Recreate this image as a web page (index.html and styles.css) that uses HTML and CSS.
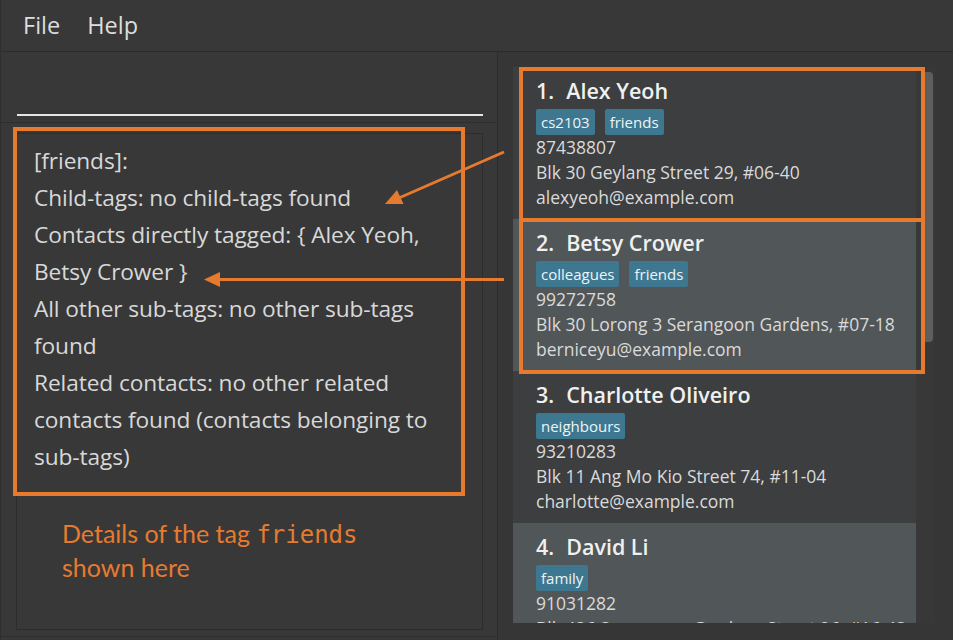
FILE: index.html
```html
<!DOCTYPE html>
<html>
<head>
<meta charset="utf-8">
<link rel="stylesheet" href="styles.css">
</head>
<body>
<div class="app">
  <div class="menubar">
    <span class="menu-item">File</span>
    <span class="menu-item">Help</span>
  </div>
  <div class="main">
    <div class="left">
      <div class="cmd"><div class="cmd-line"></div></div>
      <div class="result-area">
        <div class="result">
          <div class="result-text">[friends]:<br>Child-tags: no child-tags found<br>Contacts directly tagged: { Alex Yeoh,<br>Betsy Crower }<br>All other sub-tags: no other sub-tags<br>found<br>Related contacts: no other related<br>contacts found (contacts belonging to<br>sub-tags)</div>
          <div class="note">Details of the tag <code class="mono">friends</code><br>shown here</div>
        </div>
      </div>
    </div>
    <div class="divider"></div>
    <div class="right">
      <div class="list">
        <div class="cards">
          <div class="card dark">
            <div class="name"><span class="idx">1.</span>Alex Yeoh</div>
            <div class="tags"><span class="tag">cs2103</span><span class="tag">friends</span></div>
            <div class="line">87438807</div>
            <div class="line">Blk 30 Geylang Street 29, #06-40</div>
            <div class="line">alexyeoh@example.com</div>
          </div>
          <div class="card light">
            <div class="name"><span class="idx">2.</span>Betsy Crower</div>
            <div class="tags"><span class="tag">colleagues</span><span class="tag">friends</span></div>
            <div class="line">99272758</div>
            <div class="line">Blk 30 Lorong 3 Serangoon Gardens, #07-18</div>
            <div class="line">berniceyu@example.com</div>
          </div>
          <div class="card dark">
            <div class="name"><span class="idx">3.</span>Charlotte Oliveiro</div>
            <div class="tags"><span class="tag">neighbours</span></div>
            <div class="line">93210283</div>
            <div class="line">Blk 11 Ang Mo Kio Street 74, #11-04</div>
            <div class="line">charlotte@example.com</div>
          </div>
          <div class="card light">
            <div class="name"><span class="idx">4.</span>David Li</div>
            <div class="tags"><span class="tag">family</span></div>
            <div class="line">91031282</div>
            <div class="line">Blk 436 Serangoon Gardens Street 26, #16-43</div>
            <div class="line">lidavid@example.com</div>
          </div>
        </div>
        <div class="scroll"><div class="thumb"></div></div>
      </div>
    </div>
  </div>

  <div class="hl hl-result"></div>
  <div class="hl hl-card1"></div>
  <div class="hl hl-card2"></div>
  <svg class="arrows" width="953" height="640" viewBox="0 0 953 640">
    <line x1="503" y1="152" x2="399" y2="197.5" stroke="#e67b2f" stroke-width="3"/>
    <polygon points="384,204 402.5,204 396,190" fill="#e67b2f"/>
    <line x1="503" y1="279.5" x2="216" y2="279.5" stroke="#e67b2f" stroke-width="3"/>
    <polygon points="203,279.5 219,272 219,287" fill="#e67b2f"/>
  </svg>
</div>
</body>
</html>
```

FILE: styles.css
```css
* { box-sizing: border-box; }
html, body { margin: 0; padding: 0; }
body {
  background: #383838;
  font-family: "Open Sans", "Noto Sans", sans-serif;
  color: #dcdcdc;
}
.app {
  position: relative;
  width: 953px;
  height: 640px;
  overflow: hidden;
  background: #383838;
  border-left: 1px solid #2f2f2f;
}
.menubar {
  height: 52px;
  border-bottom: 1px solid #2b2b2b;
  display: flex;
  align-items: center;
  padding-left: 22px;
  gap: 27px;
  padding-bottom: 1px;
}
.menu-item {
  font-size: 23.5px;
  color: #dedede;
  font-family: "Open Sans", sans-serif;
}
.main {
  display: flex;
  height: 588px;
}
.left {
  width: 497px;
  display: flex;
  flex-direction: column;
  border-bottom: 1px solid #2e2e2e;
  height: 585px;
}
.cmd {
  height: 71px;
  border-bottom: 1px solid #2e2e2e;
  padding: 62px 14px 0 16px;
}
.cmd-line {
  height: 2px;
  background: #e6e6e6;
}
.result-area {
  padding: 10px 14px 6px 15px;
  flex: 1;
  display: flex;
}
.result {
  flex: 1;
  border: 1px solid #2c2c2c;
  padding: 8px 8px 0 17px;
}
.result-text {
  font-size: 22.7px;
  line-height: 37px;
  color: #d8d8d8;
  letter-spacing: -0.1px;
  white-space: nowrap;
}
.note {
  margin-top: 42px;
  margin-left: 28px;
  font-family: "Lato", "Open Sans", sans-serif;
  font-size: 25px;
  line-height: 32px;
  color: #e67b2f;
}
.mono {
  font-family: "DejaVu Sans Mono", "Liberation Mono", monospace;
  font-size: 24px;
}
.divider {
  width: 3px;
  border-left: 1px solid #2c2c2c;
  background: #363636;
}
.right {
  flex: 1;
  padding: 15px 18px 14px 13px;
  background: #363636;
}
.list {
  display: flex;
  height: 556px;
  overflow: hidden;
  background: #3a3a3a;
}
.cards {
  width: 403px;
  display: flex;
  flex-direction: column;
}
.card {
  height: 152px;
  flex-shrink: 0;
  padding: 11px 6px 9px 23px;
  overflow: hidden;
}
.card.dark { background: #3c3e40; }
.card.light { background: #515658; }
.name {
  font-weight: 600;
  font-size: 21.5px;
  line-height: 26px;
  color: #f0f0f0;
}
.idx {
  margin-right: 12px;
}
.tags {
  display: flex;
  gap: 10px;
  margin-top: 5px;
  height: 26px;
}
.tag {
  background: #3d7890;
  color: #eef4f6;
  font-size: 15px;
  line-height: 26px;
  padding: 0 5px;
  border-radius: 2px;
}
.line {
  font-size: 17.5px;
  line-height: 25px;
  color: #dadada;
  white-space: nowrap;
}
.scroll {
  width: 19px;
  padding: 5px 2px 0 6px;
  background: #383838;
}
.thumb {
  height: 270px;
  background: #5e5e5e;
  border-radius: 0 4px 4px 0;
}
.hl {
  position: absolute;
  border: 4px solid #e67b2f;
  pointer-events: none;
}
.hl-result { left: 12px; top: 127px; width: 452px; height: 369px; }
.hl-card1 { left: 518px; top: 67px; width: 406px; height: 155px; }
.hl-card2 { left: 518px; top: 218px; width: 406px; height: 156px; }
.arrows {
  position: absolute;
  left: 0;
  top: 0;
  pointer-events: none;
}
```
